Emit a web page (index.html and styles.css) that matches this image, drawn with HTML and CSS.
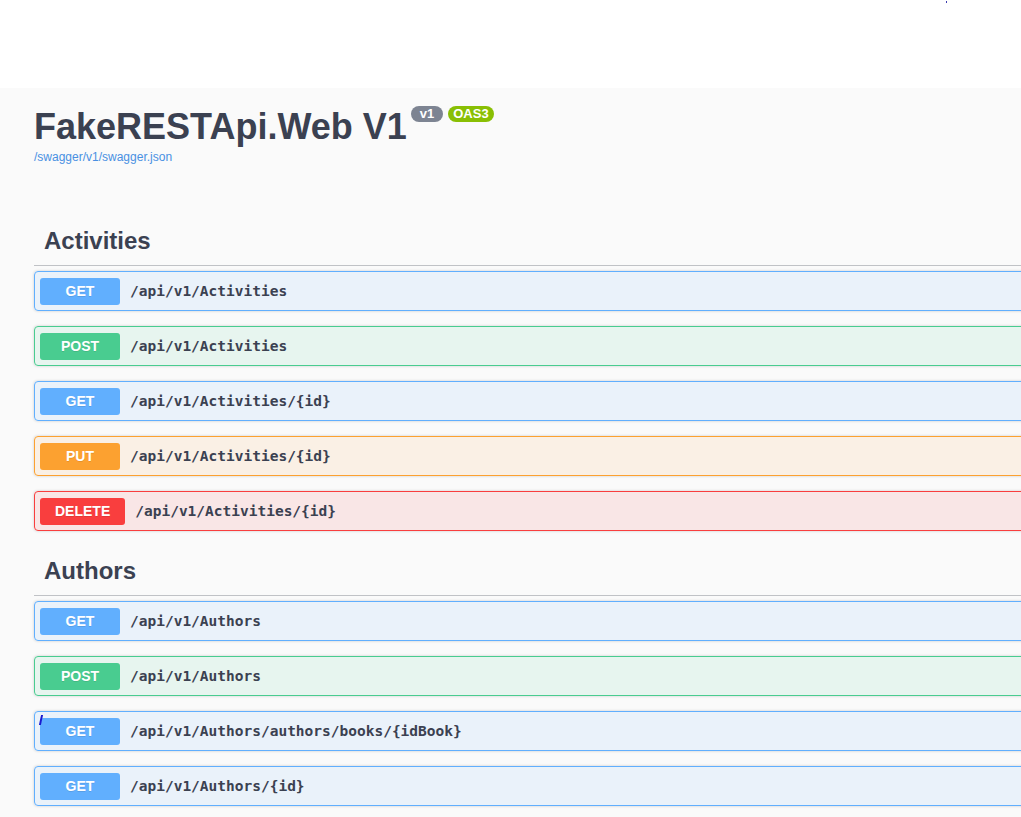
FILE: index.html
```html
<!DOCTYPE html>
<html>
<head>
<meta charset="utf-8">
<title>FakeRESTApi.Web V1</title>
<link rel="stylesheet" href="styles.css">
</head>
<body>
<div class="topbar"><span class="dot"></span></div>
<main class="page">
  <div class="info">
    <h2 class="title">FakeRESTApi.Web V1<span class="badge v">v1</span><span class="badge oas">OAS3</span></h2>
    <a class="spec-link" href="#">/swagger/v1/swagger.json</a>
  </div>

  <section class="tag-section">
    <h3 class="tag">Activities</h3>
    <div class="op get"><span class="method">GET</span><span class="path">/api/v1/Activities</span></div>
    <div class="op post"><span class="method">POST</span><span class="path">/api/v1/Activities</span></div>
    <div class="op get"><span class="method">GET</span><span class="path">/api/v1/Activities/{id}</span></div>
    <div class="op put"><span class="method">PUT</span><span class="path">/api/v1/Activities/{id}</span></div>
    <div class="op delete"><span class="method">DELETE</span><span class="path">/api/v1/Activities/{id}</span></div>
  </section>

  <section class="tag-section">
    <h3 class="tag">Authors</h3>
    <div class="op get"><span class="method">GET</span><span class="path">/api/v1/Authors</span></div>
    <div class="op post"><span class="method">POST</span><span class="path">/api/v1/Authors</span></div>
    <div class="op get"><span class="cursor"></span><span class="method">GET</span><span class="path">/api/v1/Authors/authors/books/{idBook}</span></div>
    <div class="op get"><span class="method">GET</span><span class="path">/api/v1/Authors/{id}</span></div>
  </section>
</main>
</body>
</html>
```

FILE: styles.css
```css
html, body {
  margin: 0;
  padding: 0;
  overflow: hidden;
}
body {
  font-family: "Liberation Sans", Arial, sans-serif;
  color: #3b4151;
  background: #fafafa;
}
.topbar {
  height: 88px;
  background: #ffffff;
  position: relative;
}
.dot {
  position: absolute;
  left: 946px;
  top: 1px;
  width: 1px;
  height: 2px;
  background: #3a3ab0;
}
.page {
  width: 1260px;
  padding: 18px 0 0 34px;
  background: #fafafa;
}
.info {
  margin-bottom: 53px;
}
.title {
  margin: 0;
  font-size: 36px;
  font-weight: 700;
  line-height: 41px;
  color: #3b4151;
}
.badge {
  display: inline-block;
  vertical-align: top;
  font-size: 13px;
  font-weight: 700;
  line-height: 16px;
  color: #fff;
  border-radius: 57px;
}
.badge.v {
  margin-left: 4px;
  padding: 0 9px;
  background: #7d8492;
}
.badge.oas {
  margin-left: 5px;
  padding: 0 5px;
  background: #89bf04;
}
.spec-link {
  display: block;
  margin-top: 3px;
  font-size: 12px;
  line-height: 14px;
  color: #4990e2;
  text-decoration: none;
}
.tag-section {
  padding-bottom: 1px;
}
.tag {
  margin: 0 0 5px;
  padding: 10px 20px 10px 10px;
  font-size: 24px;
  line-height: 28px;
  font-weight: 700;
  border-bottom: 1px solid rgba(59, 65, 81, 0.3);
}
.op {
  position: relative;
  display: flex;
  align-items: center;
  height: 38px;
  margin-bottom: 15px;
  padding: 0 5px;
  border: 1px solid;
  border-radius: 4px;
  box-shadow: 0 0 3px rgba(0, 0, 0, 0.19);
}
.method {
  box-sizing: border-box;
  min-width: 80px;
  padding: 6px 15px;
  font-size: 14px;
  line-height: 15px;
  font-weight: 700;
  text-align: center;
  color: #fff;
  border-radius: 3px;
  text-shadow: 0 1px 0 rgba(0, 0, 0, 0.1);
}
.path {
  padding: 0 10px;
  font-family: "DejaVu Sans Mono", "Liberation Mono", monospace;
  font-size: 14.5px;
  font-weight: 700;
  color: #3b4151;
}
.get { background: rgba(97, 175, 254, 0.1); border-color: #61affe; }
.get .method { background: #61affe; }
.post { background: rgba(73, 204, 144, 0.1); border-color: #49cc90; }
.post .method { background: #49cc90; }
.put { background: rgba(252, 161, 48, 0.1); border-color: #fca130; }
.put .method { background: #fca130; }
.delete { background: rgba(249, 62, 62, 0.1); border-color: #f93e3e; }
.delete .method { background: #f93e3e; }
.cursor {
  position: absolute;
  left: 5px;
  top: 3px;
  width: 2px;
  height: 10px;
  background: #1a1ad0;
  transform: skewX(-12deg);
}
```
